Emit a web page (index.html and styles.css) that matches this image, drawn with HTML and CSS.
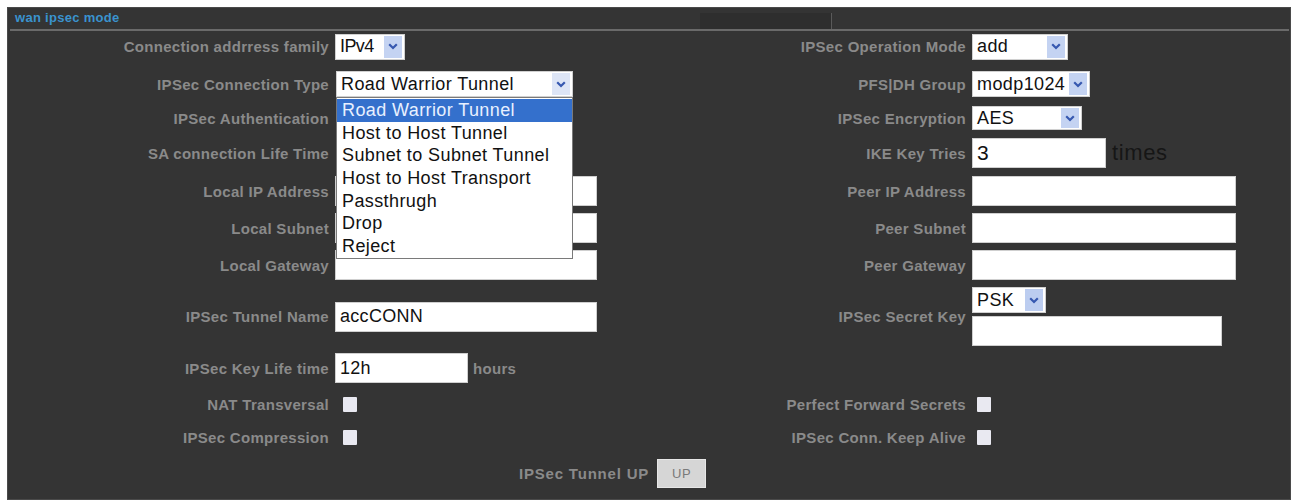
FILE: index.html
```html
<!DOCTYPE html>
<html>
<head>
<meta charset="utf-8">
<title>wan ipsec mode</title>
<link rel="stylesheet" href="styles.css">
</head>
<body>
<div class="panel">
  <div class="head">
    <span class="title">wan ipsec mode</span>
    <span class="tab"></span>
  </div>
  <div class="form">
    <!-- row 1 -->
    <div class="lbl">Connection addrress family</div>
    <div class="fld">
      <div class="sel w-ipv4"><span class="val">IPv4</span><span class="arr"><svg viewBox="0 0 10 7" width="10" height="7"><path d="M1.2 1.2 L5 5 L8.8 1.2" /></svg></span></div>
    </div>
    <div class="lbl">IPSec Operation Mode</div>
    <div class="fld">
      <div class="sel w-add"><span class="val">add</span><span class="arr"><svg viewBox="0 0 10 7" width="10" height="7"><path d="M1.2 1.2 L5 5 L8.8 1.2" /></svg></span></div>
    </div>

    <!-- row 2 -->
    <div class="lbl">IPSec Connection Type</div>
    <div class="fld">
      <div class="sel w-type open"><span class="val">Road Warrior Tunnel</span><span class="arr pale"><svg viewBox="0 0 10 7" width="10" height="7"><path d="M1.2 1.2 L5 5 L8.8 1.2" /></svg></span>
        <ul class="menu">
          <li class="on">Road Warrior Tunnel</li>
          <li>Host to Host Tunnel</li>
          <li>Subnet to Subnet Tunnel</li>
          <li>Host to Host Transport</li>
          <li>Passthrugh</li>
          <li>Drop</li>
          <li>Reject</li>
        </ul>
      </div>
    </div>
    <div class="lbl">PFS|DH Group</div>
    <div class="fld">
      <div class="sel w-pfs"><span class="val">modp1024</span><span class="arr"><svg viewBox="0 0 10 7" width="10" height="7"><path d="M1.2 1.2 L5 5 L8.8 1.2" /></svg></span></div>
    </div>

    <!-- row 3 -->
    <div class="lbl">IPSec Authentication</div>
    <div class="fld"></div>
    <div class="lbl">IPSec Encryption</div>
    <div class="fld">
      <div class="sel w-aes short"><span class="val">AES</span><span class="arr"><svg viewBox="0 0 10 7" width="10" height="7"><path d="M1.2 1.2 L5 5 L8.8 1.2" /></svg></span></div>
    </div>

    <!-- row 4 -->
    <div class="lbl">SA connection Life Time</div>
    <div class="fld"></div>
    <div class="lbl">IKE Key Tries</div>
    <div class="fld gap6">
      <div class="inp w-ike big">3</div>
      <span class="unit-dark">times</span>
    </div>

    <!-- row 5 -->
    <div class="lbl">Local IP Address</div>
    <div class="fld"><div class="inp w-long"></div></div>
    <div class="lbl">Peer IP Address</div>
    <div class="fld"><div class="inp w-longr"></div></div>

    <!-- row 6 -->
    <div class="lbl">Local Subnet</div>
    <div class="fld"><div class="inp w-long"></div></div>
    <div class="lbl">Peer Subnet</div>
    <div class="fld"><div class="inp w-longr"></div></div>

    <!-- row 7 -->
    <div class="lbl">Local Gateway</div>
    <div class="fld"><div class="inp w-long"></div></div>
    <div class="lbl">Peer Gateway</div>
    <div class="fld"><div class="inp w-longr"></div></div>

    <!-- row 8 -->
    <div class="lbl">IPSec Tunnel Name</div>
    <div class="fld"><div class="inp w-long">accCONN</div></div>
    <div class="lbl">IPSec Secret Key</div>
    <div class="fld col">
      <div class="sel w-psk"><span class="val">PSK</span><span class="arr"><svg viewBox="0 0 10 7" width="10" height="7"><path d="M1.2 1.2 L5 5 L8.8 1.2" /></svg></span></div>
      <div class="inp w-secret"></div>
    </div>

    <!-- row 9 -->
    <div class="lbl">IPSec Key Life time</div>
    <div class="fld gap5">
      <div class="inp w-life">12h</div>
      <span class="unit">hours</span>
    </div>
    <div class="lbl"></div>
    <div class="fld"></div>

    <!-- row 10 -->
    <div class="lbl">NAT Transversal</div>
    <div class="fld"><span class="chk"></span></div>
    <div class="lbl">Perfect Forward Secrets</div>
    <div class="fld"><span class="chk r"></span></div>

    <!-- row 11 -->
    <div class="lbl">IPSec Compression</div>
    <div class="fld"><span class="chk"></span></div>
    <div class="lbl">IPSec Conn. Keep Alive</div>
    <div class="fld"><span class="chk r"></span></div>
  </div>
  <div class="foot">
    <span class="lbl wide">IPSec Tunnel UP</span>
    <button class="btn">UP</button>
  </div>
</div>
</body>
</html>
```

FILE: styles.css
```css
html, body {
  margin: 0;
  padding: 0;
  background: #ffffff;
}

.panel {
  margin: 7px 0 0 7px;
  width: 1284px;
  height: 493px;
  box-sizing: border-box;
  border: 1px solid #4a4a4a;
  background: #343434;
  font-family: "Liberation Sans", Arial, sans-serif;
  display: flex;
  flex-direction: column;
}

.head {
  position: relative;
  height: 21px;
  margin: 0 1px 0 2px;
  border-bottom: 2px solid #6a6a6a;
  display: flex;
  align-items: flex-start;
}

.title {
  padding: 3px 0 0 5px;
  font-size: 13px;
  line-height: 14px;
  font-weight: bold;
  letter-spacing: 0.3px;
  color: #3a93cf;
}

.tab {
  position: absolute;
  left: 690px;
  top: 5px;
  width: 131px;
  height: 16px;
  background: #2e2e2e;
  border-right: 1px solid #5a5a5a;
}

.form {
  display: grid;
  grid-template-columns: 321px 300px 325px 1fr;
  grid-template-rows: 31px 44px 24px 46px 30px 44px 30px 73px 30px 42px 24px;
  column-gap: 6px;
}

.lbl {
  display: flex;
  align-items: center;
  justify-content: flex-end;
  font-size: 15px;
  font-weight: bold;
  letter-spacing: 0.3px;
  color: #8a8a8a;
  white-space: nowrap;
}

.lbl.wide {
  letter-spacing: 0.8px;
}

.fld {
  display: flex;
  align-items: center;
}

.fld.gap5 { gap: 5px; }
.fld.gap6 { gap: 6px; }

.fld.col {
  flex-direction: column;
  align-items: flex-start;
  justify-content: center;
  gap: 3px;
}

.sel {
  position: relative;
  box-sizing: border-box;
  height: 26px;
  background: #ffffff;
  border: 1px solid #d0d0d0;
  display: flex;
  align-items: center;
  justify-content: space-between;
  font-size: 18px;
  color: #111;
}

.sel .val {
  padding-left: 4px;
  letter-spacing: 0.4px;
}

.sel .arr {
  width: 18px;
  height: 22px;
  margin-right: 2px;
  background: #c4d3f2;
  display: flex;
  align-items: center;
  justify-content: center;
}

.sel .arr.pale {
  background: #dde5f6;
}

.sel .arr path {
  fill: none;
  stroke: #3658b0;
  stroke-width: 2.2;
}

.w-ipv4 { width: 70px; }
.w-ipv4 .val { letter-spacing: -0.6px; }
.w-add { width: 96px; }
.w-type { width: 237px; margin-left: 1px; }
.w-pfs { width: 118px; }
.w-aes { width: 110px; }
.w-aes.short { height: 24px; }
.w-aes .arr { height: 20px; }
.w-psk { width: 74px; }
.w-psk .arr { background: #bccdf0; }

.menu {
  position: absolute;
  left: -1px;
  top: 25px;
  width: 237px;
  box-sizing: border-box;
  margin: 0;
  padding: 1px 0 0;
  list-style: none;
  background: #ffffff;
  border: 1px solid #7a7a7a;
  z-index: 2;
}

.menu li {
  height: 22.7px;
  line-height: 22px;
  padding-left: 5px;
  font-size: 18px;
  letter-spacing: 0.4px;
  color: #111;
  white-space: nowrap;
}

.menu li.on {
  background: #3470cc;
  color: #e8f0ff;
}

.inp {
  box-sizing: border-box;
  height: 30px;
  background: #ffffff;
  border: 1px solid #cfcfcf;
  padding-left: 4px;
  display: flex;
  align-items: center;
  font-size: 18px;
  letter-spacing: 0.3px;
  color: #111;
}

.inp.big { font-size: 21px; }

.w-long { width: 262px; }
.w-longr { width: 264px; }
.w-secret { width: 250px; }
.w-life { width: 133px; }
.w-ike { width: 134px; }

.unit {
  font-size: 15px;
  font-weight: bold;
  letter-spacing: 0.3px;
  color: #8a8a8a;
}

.unit-dark {
  font-size: 22px;
  color: #161616;
  letter-spacing: 0.6px;
}

.chk {
  width: 14px;
  height: 15px;
  margin-left: 8px;
  background: #e9e9f1;
  border-radius: 1px;
}

.chk.r { margin-left: 5px; }

.foot {
  flex: 1;
  display: flex;
  align-items: center;
  gap: 8px;
  padding: 0 0 2px 511px;
}

.btn {
  width: 49px;
  height: 29px;
  padding: 0;
  margin: 0;
  border: 1px solid #e6e6e6;
  background: #d6d6d6;
  font-family: "Liberation Sans", Arial, sans-serif;
  font-size: 13px;
  letter-spacing: 0.5px;
  color: #7a7a7a;
}
```
